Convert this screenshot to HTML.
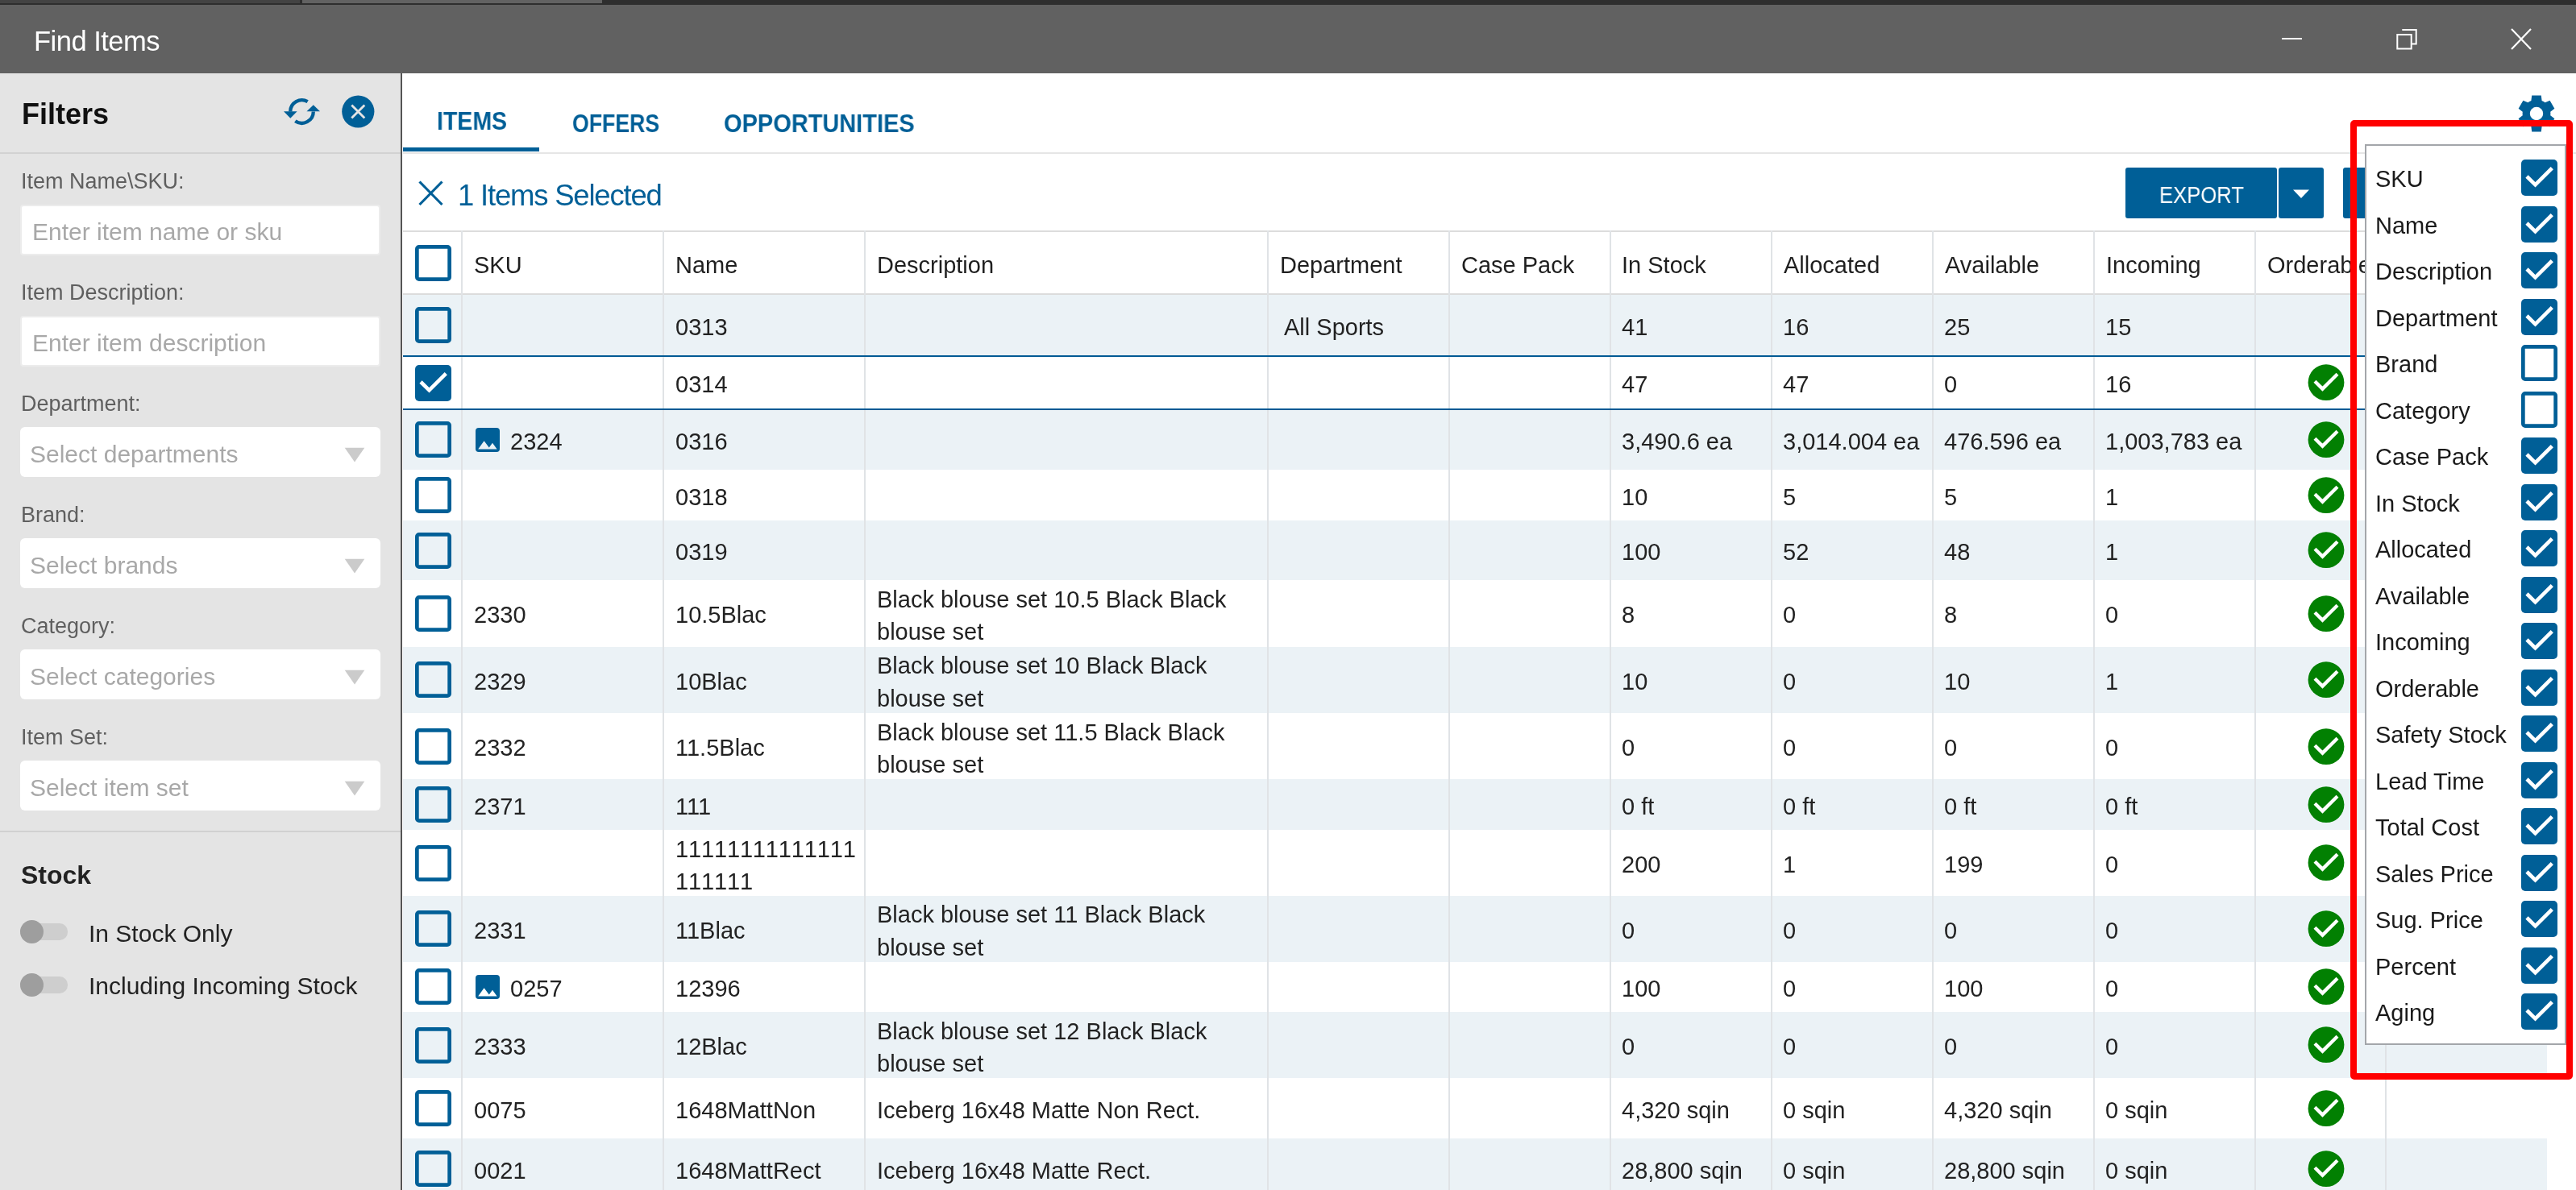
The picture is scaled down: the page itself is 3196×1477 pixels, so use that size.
<!DOCTYPE html>
<html><head><meta charset="utf-8"><title>Find Items</title>
<style>
html,body{margin:0;padding:0;}
body{width:3196px;height:1477px;overflow:hidden;position:relative;background:#fff;font-family:"Liberation Sans",sans-serif;}
body>div,body>svg{position:absolute;}
.t{position:absolute;line-height:1;white-space:nowrap;will-change:transform;}
</style></head><body>

<div style="left:0px;top:0px;width:3196px;height:6px;background:#2e2e2e"></div>
<div style="left:0px;top:0px;width:372px;height:4px;background:#434343"></div>
<div style="left:375px;top:0px;width:372px;height:4px;background:#626262"></div>
<div style="left:0px;top:6px;width:3196px;height:85px;background:#616161"></div>
<div class="t" style="left:41.5px;top:33.8px;font-size:34.5px;color:#ffffff;letter-spacing:-0.5px">Find Items</div>
<div style="left:2831px;top:47px;width:25px;height:2px;background:#fff"></div>
<svg style="position:absolute;left:2970px;top:33px;" width="32" height="32" viewBox="0 0 32 32"><path d="M4.3 10 H21.7 V27.4 H4.3 Z" fill="none" stroke="#fff" stroke-width="2"/><path d="M10.3 4 H27.7 V21.4 H21.7" fill="none" stroke="#fff" stroke-width="2"/></svg>
<svg style="position:absolute;left:3112px;top:32px;" width="32" height="33" viewBox="0 0 32 33"><path d="M4 4 L28 29 M28 4 L4 29" stroke="#fff" stroke-width="2.2"/></svg>
<div style="left:0px;top:91px;width:497px;height:1386px;background:#e4e4e4"></div>
<div style="left:497px;top:91px;width:2.2px;height:1386px;background:#555555"></div>
<div class="t" style="left:27px;top:123.5px;font-size:36px;color:#111111;font-weight:bold">Filters</div>
<svg style="position:absolute;left:340px;top:110px;" width="70" height="60" viewBox="0 0 70 60"><path d="M41.65 16.12 A14.3 14.3 0 0 0 20.20 28.50" fill="none" stroke="#005f97" stroke-width="4.3"/><path d="M12 28.3 L28.6 28.3 L20.3 36.8 Z" fill="#005f97"/><path d="M48.80 28.50 A14.3 14.3 0 0 1 26.30 40.21" fill="none" stroke="#005f97" stroke-width="4.3"/><path d="M40.5 28.3 L57 28.3 L48.8 20.2 Z" fill="#005f97"/></svg>
<svg style="position:absolute;left:424px;top:118px;" width="41" height="41" viewBox="0 0 41 41"><circle cx="20.3" cy="20.5" r="20.1" fill="#005f97"/><path d="M12.3 12.5 L28.3 28.5 M28.3 12.5 L12.3 28.5" stroke="#e4e4e4" stroke-width="2.8"/></svg>
<div style="left:0px;top:189px;width:497px;height:2px;background:#d2d2d2"></div>
<div class="t" style="left:26px;top:211.7px;font-size:27px;color:#5f5f5f;">Item Name\SKU:</div>
<div class="t" style="left:26px;top:349.8px;font-size:27px;color:#5f5f5f;">Item Description:</div>
<div class="t" style="left:26px;top:487.9px;font-size:27px;color:#5f5f5f;">Department:</div>
<div class="t" style="left:26px;top:626.0px;font-size:27px;color:#5f5f5f;">Brand:</div>
<div class="t" style="left:26px;top:764.1px;font-size:27px;color:#5f5f5f;">Category:</div>
<div class="t" style="left:26px;top:902.2px;font-size:27px;color:#5f5f5f;">Item Set:</div>
<div style="left:25px;top:254px;width:447px;height:63px;background:#fff;box-sizing:border-box;border:2px solid #ececec;border-radius:4px"></div>
<div class="t" style="left:40px;top:273.0px;font-size:30px;color:#a8a8a8;">Enter item name or sku</div>
<div style="left:25px;top:392px;width:447px;height:63px;background:#fff;box-sizing:border-box;border:2px solid #ececec;border-radius:4px"></div>
<div class="t" style="left:40px;top:411.0px;font-size:30px;color:#a8a8a8;">Enter item description</div>
<div style="left:25px;top:530px;width:447px;height:62px;background:#fff;border-radius:6px"></div>
<div class="t" style="left:37px;top:548.9px;font-size:30px;color:#a8a8a8;">Select departments</div>
<svg style="position:absolute;left:427px;top:554px;" width="26" height="20" viewBox="0 0 26 20"><path d="M0.7 1.7 L25.3 1.7 L13 19.5 Z" fill="#cbcbcb"/></svg>
<div style="left:25px;top:668px;width:447px;height:62px;background:#fff;border-radius:6px"></div>
<div class="t" style="left:37px;top:687.0px;font-size:30px;color:#a8a8a8;">Select brands</div>
<svg style="position:absolute;left:427px;top:692px;" width="26" height="20" viewBox="0 0 26 20"><path d="M0.7 1.7 L25.3 1.7 L13 19.5 Z" fill="#cbcbcb"/></svg>
<div style="left:25px;top:806px;width:447px;height:62px;background:#fff;border-radius:6px"></div>
<div class="t" style="left:37px;top:825.1px;font-size:30px;color:#a8a8a8;">Select categories</div>
<svg style="position:absolute;left:427px;top:830px;" width="26" height="20" viewBox="0 0 26 20"><path d="M0.7 1.7 L25.3 1.7 L13 19.5 Z" fill="#cbcbcb"/></svg>
<div style="left:25px;top:944px;width:447px;height:62px;background:#fff;border-radius:6px"></div>
<div class="t" style="left:37px;top:963.2px;font-size:30px;color:#a8a8a8;">Select item set</div>
<svg style="position:absolute;left:427px;top:968px;" width="26" height="20" viewBox="0 0 26 20"><path d="M0.7 1.7 L25.3 1.7 L13 19.5 Z" fill="#cbcbcb"/></svg>
<div style="left:0px;top:1031px;width:497px;height:2px;background:#d0d0d0"></div>
<div class="t" style="left:26px;top:1069.9px;font-size:32px;color:#222222;font-weight:bold">Stock</div>
<div style="left:25px;top:1146px;width:59px;height:20.5px;background:#cecece;border-radius:10px"></div>
<div style="left:24.5px;top:1142px;width:29px;height:29px;background:#9e9e9e;border-radius:50%"></div>
<div class="t" style="left:110px;top:1143.9px;font-size:30px;color:#222222;">In Stock Only</div>
<div style="left:25px;top:1212px;width:59px;height:20.5px;background:#cecece;border-radius:10px"></div>
<div style="left:24.5px;top:1208px;width:29px;height:29px;background:#9e9e9e;border-radius:50%"></div>
<div class="t" style="left:110px;top:1209.2px;font-size:30px;color:#222222;">Including Incoming Stock</div>
<div class="t" style="left:541.5px;top:135.2px;font-size:30.5px;color:#005f97;font-weight:bold;transform:scaleX(0.935);transform-origin:0 0">ITEMS</div>
<div class="t" style="left:710px;top:138.2px;font-size:30.5px;color:#005f97;font-weight:bold;transform:scaleX(0.875);transform-origin:0 0">OFFERS</div>
<div class="t" style="left:897.5px;top:138.2px;font-size:30.5px;color:#005f97;font-weight:bold;transform:scaleX(0.95);transform-origin:0 0">OPPORTUNITIES</div>
<div style="left:500px;top:189px;width:2696px;height:2px;background:#e6e6e6"></div>
<div style="left:500px;top:183px;width:169px;height:5px;background:#005f97"></div>
<svg style="position:absolute;left:3120px;top:114px;" width="54" height="54" viewBox="0 0 54 54"><path d="M18.30 11.93 L20.40 10.90 L21.20 4.54 L32.80 4.54 L33.60 10.90 L35.70 11.93 L37.64 13.23 L43.55 10.75 L49.35 20.79 L44.24 24.67 L44.40 27.00 L44.24 29.33 L49.35 33.21 L43.55 43.25 L37.64 40.77 L35.70 42.07 L33.60 43.10 L32.80 49.46 L21.20 49.46 L20.40 43.10 L18.30 42.07 L16.36 40.77 L10.45 43.25 L4.65 33.21 L9.76 29.33 L9.60 27.00 L9.76 24.67 L4.65 20.79 L10.45 10.75 L16.36 13.23 Z" fill="#005f97"/><circle cx="27" cy="27" r="8.2" fill="#fff"/></svg>
<svg style="position:absolute;left:517px;top:222px;" width="36" height="36" viewBox="0 0 36 36"><path d="M3.5 3.5 L31.5 32 M31.5 3.5 L3.5 32" stroke="#005f97" stroke-width="3.2"/></svg>
<div class="t" style="left:568px;top:224.6px;font-size:36.5px;color:#005f97;letter-spacing:-1.2px">1 Items Selected</div>
<div style="left:2637px;top:208px;width:188px;height:63px;background:#005f97;border-radius:3px"></div>
<div class="t" style="left:2679px;top:227.1px;font-size:30px;color:#ffffff;transform:scaleX(0.855);transform-origin:0 0">EXPORT</div>
<div style="left:2827px;top:208px;width:56px;height:63px;background:#005f97;border-radius:3px"></div>
<svg style="position:absolute;left:2844px;top:235px;" width="22" height="12" viewBox="0 0 22 12"><path d="M1 0.5 L21 0.5 L11 11 Z" fill="#fff"/></svg>
<div style="left:2907px;top:208px;width:60px;height:63px;background:#005f97;border-radius:3px"></div>
<div style="left:500px;top:365px;width:2660px;height:77px;background:#ebf2f6"></div>
<div style="left:500px;top:508px;width:2660px;height:75px;background:#ebf2f6"></div>
<div style="left:500px;top:646px;width:2660px;height:74px;background:#ebf2f6"></div>
<div style="left:500px;top:802.5px;width:2660px;height:82.5px;background:#ebf2f6"></div>
<div style="left:500px;top:967px;width:2660px;height:63px;background:#ebf2f6"></div>
<div style="left:500px;top:1112px;width:2660px;height:81.5px;background:#ebf2f6"></div>
<div style="left:500px;top:1256px;width:2660px;height:82px;background:#ebf2f6"></div>
<div style="left:500px;top:1413px;width:2660px;height:64px;background:#ebf2f6"></div>
<div style="left:500px;top:286px;width:2660px;height:2px;background:#dcdcdc"></div>
<div style="left:500px;top:364px;width:2660px;height:2px;background:#dcdcdc"></div>
<div style="left:572px;top:286px;width:2px;height:1191px;background:#e0e3e6"></div>
<div style="left:822px;top:286px;width:2px;height:1191px;background:#e0e3e6"></div>
<div style="left:1072px;top:286px;width:2px;height:1191px;background:#e0e3e6"></div>
<div style="left:1572px;top:286px;width:2px;height:1191px;background:#e0e3e6"></div>
<div style="left:1797px;top:286px;width:2px;height:1191px;background:#e0e3e6"></div>
<div style="left:1997px;top:286px;width:2px;height:1191px;background:#e0e3e6"></div>
<div style="left:2197px;top:286px;width:2px;height:1191px;background:#e0e3e6"></div>
<div style="left:2397px;top:286px;width:2px;height:1191px;background:#e0e3e6"></div>
<div style="left:2597px;top:286px;width:2px;height:1191px;background:#e0e3e6"></div>
<div style="left:2797px;top:286px;width:2px;height:1191px;background:#e0e3e6"></div>
<div style="left:2959px;top:286px;width:2px;height:1191px;background:#e0e3e6"></div>
<div style="left:500px;top:441px;width:2660px;height:2px;background:#005a94"></div>
<div style="left:500px;top:507px;width:2660px;height:2px;background:#005a94"></div>
<svg style="position:absolute;left:515px;top:304px" width="45" height="45" viewBox="0 0 45 45"><path fill-rule="evenodd" fill="#005f97" d="M5 0 H40 A5 5 0 0 1 45 5 V40 A5 5 0 0 1 40 45 H5 A5 5 0 0 1 0 40 V5 A5 5 0 0 1 5 0 Z M4.7 4.7 V40.3 H40.3 V4.7 Z"/></svg>
<div class="t" style="left:588px;top:314.8px;font-size:29px;color:#1f1f1f;">SKU</div>
<div class="t" style="left:838px;top:314.8px;font-size:29px;color:#1f1f1f;">Name</div>
<div class="t" style="left:1088px;top:314.8px;font-size:29px;color:#1f1f1f;">Description</div>
<div class="t" style="left:1588px;top:314.8px;font-size:29px;color:#1f1f1f;">Department</div>
<div class="t" style="left:1813px;top:314.8px;font-size:29px;color:#1f1f1f;">Case Pack</div>
<div class="t" style="left:2012px;top:314.8px;font-size:29px;color:#1f1f1f;">In Stock</div>
<div class="t" style="left:2213px;top:314.8px;font-size:29px;color:#1f1f1f;">Allocated</div>
<div class="t" style="left:2413px;top:314.8px;font-size:29px;color:#1f1f1f;">Available</div>
<div class="t" style="left:2613px;top:314.8px;font-size:29px;color:#1f1f1f;">Incoming</div>
<div class="t" style="left:2813px;top:314.8px;font-size:29px;color:#1f1f1f;">Orderable</div>
<svg style="position:absolute;left:515px;top:381px" width="45" height="45" viewBox="0 0 45 45"><path fill-rule="evenodd" fill="#005f97" d="M5 0 H40 A5 5 0 0 1 45 5 V40 A5 5 0 0 1 40 45 H5 A5 5 0 0 1 0 40 V5 A5 5 0 0 1 5 0 Z M4.7 4.7 V40.3 H40.3 V4.7 Z"/></svg>
<div class="t" style="left:838px;top:391.5px;font-size:29px;color:#222222;">0313</div>
<div class="t" style="left:1592.6px;top:391.5px;font-size:29px;color:#222222;">All Sports</div>
<div class="t" style="left:2012px;top:391.5px;font-size:29px;color:#222222;">41</div>
<div class="t" style="left:2212px;top:391.5px;font-size:29px;color:#222222;">16</div>
<div class="t" style="left:2412px;top:391.5px;font-size:29px;color:#222222;">25</div>
<div class="t" style="left:2612px;top:391.5px;font-size:29px;color:#222222;">15</div>
<svg style="position:absolute;left:515px;top:453px" width="45" height="45" viewBox="0 0 45 45"><rect x="0" y="0" width="45" height="45" rx="5" fill="#005f97"/><path d="M7 21 L17.5 31.3 L38.3 10.6" fill="none" stroke="#fff" stroke-width="4.6"/></svg>
<div class="t" style="left:838px;top:463.0px;font-size:29px;color:#222222;">0314</div>
<div class="t" style="left:2012px;top:463.0px;font-size:29px;color:#222222;">47</div>
<div class="t" style="left:2212px;top:463.0px;font-size:29px;color:#222222;">47</div>
<div class="t" style="left:2412px;top:463.0px;font-size:29px;color:#222222;">0</div>
<div class="t" style="left:2612px;top:463.0px;font-size:29px;color:#222222;">16</div>
<svg style="position:absolute;left:2863px;top:452px;" width="46" height="46" viewBox="0 0 46 46"><circle cx="23" cy="22.7" r="22.4" fill="#028002"/><path d="M9 21.2 L18.5 30.6 L37 12.2" fill="none" stroke="#fff" stroke-width="4.3"/></svg>
<svg style="position:absolute;left:515px;top:523px" width="45" height="45" viewBox="0 0 45 45"><path fill-rule="evenodd" fill="#005f97" d="M5 0 H40 A5 5 0 0 1 45 5 V40 A5 5 0 0 1 40 45 H5 A5 5 0 0 1 0 40 V5 A5 5 0 0 1 5 0 Z M4.7 4.7 V40.3 H40.3 V4.7 Z"/></svg>
<svg style="position:absolute;left:589.5px;top:531px;" width="30" height="30" viewBox="0 0 30 30"><rect x="0" y="0" width="30" height="30" rx="4" fill="#005f97"/><path d="M3.2 26.4 L10.6 16.2 L16.8 24.6 L21 18.8 L26.6 26.4 Z" fill="#ebf2f6"/></svg>
<div class="t" style="left:633px;top:533.5px;font-size:29px;color:#222222;">2324</div>
<div class="t" style="left:838px;top:533.5px;font-size:29px;color:#222222;">0316</div>
<div class="t" style="left:2012px;top:533.5px;font-size:29px;color:#222222;">3,490.6 ea</div>
<div class="t" style="left:2212px;top:533.5px;font-size:29px;color:#222222;">3,014.004 ea</div>
<div class="t" style="left:2412px;top:533.5px;font-size:29px;color:#222222;">476.596 ea</div>
<div class="t" style="left:2612px;top:533.5px;font-size:29px;color:#222222;">1,003,783 ea</div>
<svg style="position:absolute;left:2863px;top:523px;" width="46" height="46" viewBox="0 0 46 46"><circle cx="23" cy="22.7" r="22.4" fill="#028002"/><path d="M9 21.2 L18.5 30.6 L37 12.2" fill="none" stroke="#fff" stroke-width="4.3"/></svg>
<svg style="position:absolute;left:515px;top:592px" width="45" height="45" viewBox="0 0 45 45"><path fill-rule="evenodd" fill="#005f97" d="M5 0 H40 A5 5 0 0 1 45 5 V40 A5 5 0 0 1 40 45 H5 A5 5 0 0 1 0 40 V5 A5 5 0 0 1 5 0 Z M4.7 4.7 V40.3 H40.3 V4.7 Z"/></svg>
<div class="t" style="left:838px;top:602.5px;font-size:29px;color:#222222;">0318</div>
<div class="t" style="left:2012px;top:602.5px;font-size:29px;color:#222222;">10</div>
<div class="t" style="left:2212px;top:602.5px;font-size:29px;color:#222222;">5</div>
<div class="t" style="left:2412px;top:602.5px;font-size:29px;color:#222222;">5</div>
<div class="t" style="left:2612px;top:602.5px;font-size:29px;color:#222222;">1</div>
<svg style="position:absolute;left:2863px;top:592px;" width="46" height="46" viewBox="0 0 46 46"><circle cx="23" cy="22.7" r="22.4" fill="#028002"/><path d="M9 21.2 L18.5 30.6 L37 12.2" fill="none" stroke="#fff" stroke-width="4.3"/></svg>
<svg style="position:absolute;left:515px;top:661px" width="45" height="45" viewBox="0 0 45 45"><path fill-rule="evenodd" fill="#005f97" d="M5 0 H40 A5 5 0 0 1 45 5 V40 A5 5 0 0 1 40 45 H5 A5 5 0 0 1 0 40 V5 A5 5 0 0 1 5 0 Z M4.7 4.7 V40.3 H40.3 V4.7 Z"/></svg>
<div class="t" style="left:838px;top:671.0px;font-size:29px;color:#222222;">0319</div>
<div class="t" style="left:2012px;top:671.0px;font-size:29px;color:#222222;">100</div>
<div class="t" style="left:2212px;top:671.0px;font-size:29px;color:#222222;">52</div>
<div class="t" style="left:2412px;top:671.0px;font-size:29px;color:#222222;">48</div>
<div class="t" style="left:2612px;top:671.0px;font-size:29px;color:#222222;">1</div>
<svg style="position:absolute;left:2863px;top:660px;" width="46" height="46" viewBox="0 0 46 46"><circle cx="23" cy="22.7" r="22.4" fill="#028002"/><path d="M9 21.2 L18.5 30.6 L37 12.2" fill="none" stroke="#fff" stroke-width="4.3"/></svg>
<svg style="position:absolute;left:515px;top:739px" width="45" height="45" viewBox="0 0 45 45"><path fill-rule="evenodd" fill="#005f97" d="M5 0 H40 A5 5 0 0 1 45 5 V40 A5 5 0 0 1 40 45 H5 A5 5 0 0 1 0 40 V5 A5 5 0 0 1 5 0 Z M4.7 4.7 V40.3 H40.3 V4.7 Z"/></svg>
<div class="t" style="left:588px;top:749.2px;font-size:29px;color:#222222;">2330</div>
<div class="t" style="left:838px;top:749.2px;font-size:29px;color:#222222;">10.5Blac</div>
<div class="t" style="left:1088px;top:729.8px;font-size:29px;color:#222222;">Black blouse set 10.5 Black Black</div>
<div class="t" style="left:1088px;top:770.0px;font-size:29px;color:#222222;">blouse set</div>
<div class="t" style="left:2012px;top:749.2px;font-size:29px;color:#222222;">8</div>
<div class="t" style="left:2212px;top:749.2px;font-size:29px;color:#222222;">0</div>
<div class="t" style="left:2412px;top:749.2px;font-size:29px;color:#222222;">8</div>
<div class="t" style="left:2612px;top:749.2px;font-size:29px;color:#222222;">0</div>
<svg style="position:absolute;left:2863px;top:739px;" width="46" height="46" viewBox="0 0 46 46"><circle cx="23" cy="22.7" r="22.4" fill="#028002"/><path d="M9 21.2 L18.5 30.6 L37 12.2" fill="none" stroke="#fff" stroke-width="4.3"/></svg>
<svg style="position:absolute;left:515px;top:821px" width="45" height="45" viewBox="0 0 45 45"><path fill-rule="evenodd" fill="#005f97" d="M5 0 H40 A5 5 0 0 1 45 5 V40 A5 5 0 0 1 40 45 H5 A5 5 0 0 1 0 40 V5 A5 5 0 0 1 5 0 Z M4.7 4.7 V40.3 H40.3 V4.7 Z"/></svg>
<div class="t" style="left:588px;top:831.7px;font-size:29px;color:#222222;">2329</div>
<div class="t" style="left:838px;top:831.7px;font-size:29px;color:#222222;">10Blac</div>
<div class="t" style="left:1088px;top:812.3px;font-size:29px;color:#222222;">Black blouse set 10 Black Black</div>
<div class="t" style="left:1088px;top:852.5px;font-size:29px;color:#222222;">blouse set</div>
<div class="t" style="left:2012px;top:831.7px;font-size:29px;color:#222222;">10</div>
<div class="t" style="left:2212px;top:831.7px;font-size:29px;color:#222222;">0</div>
<div class="t" style="left:2412px;top:831.7px;font-size:29px;color:#222222;">10</div>
<div class="t" style="left:2612px;top:831.7px;font-size:29px;color:#222222;">1</div>
<svg style="position:absolute;left:2863px;top:821px;" width="46" height="46" viewBox="0 0 46 46"><circle cx="23" cy="22.7" r="22.4" fill="#028002"/><path d="M9 21.2 L18.5 30.6 L37 12.2" fill="none" stroke="#fff" stroke-width="4.3"/></svg>
<svg style="position:absolute;left:515px;top:904px" width="45" height="45" viewBox="0 0 45 45"><path fill-rule="evenodd" fill="#005f97" d="M5 0 H40 A5 5 0 0 1 45 5 V40 A5 5 0 0 1 40 45 H5 A5 5 0 0 1 0 40 V5 A5 5 0 0 1 5 0 Z M4.7 4.7 V40.3 H40.3 V4.7 Z"/></svg>
<div class="t" style="left:588px;top:914.0px;font-size:29px;color:#222222;">2332</div>
<div class="t" style="left:838px;top:914.0px;font-size:29px;color:#222222;">11.5Blac</div>
<div class="t" style="left:1088px;top:894.6px;font-size:29px;color:#222222;">Black blouse set 11.5 Black Black</div>
<div class="t" style="left:1088px;top:934.8px;font-size:29px;color:#222222;">blouse set</div>
<div class="t" style="left:2012px;top:914.0px;font-size:29px;color:#222222;">0</div>
<div class="t" style="left:2212px;top:914.0px;font-size:29px;color:#222222;">0</div>
<div class="t" style="left:2412px;top:914.0px;font-size:29px;color:#222222;">0</div>
<div class="t" style="left:2612px;top:914.0px;font-size:29px;color:#222222;">0</div>
<svg style="position:absolute;left:2863px;top:904px;" width="46" height="46" viewBox="0 0 46 46"><circle cx="23" cy="22.7" r="22.4" fill="#028002"/><path d="M9 21.2 L18.5 30.6 L37 12.2" fill="none" stroke="#fff" stroke-width="4.3"/></svg>
<svg style="position:absolute;left:515px;top:976px" width="45" height="45" viewBox="0 0 45 45"><path fill-rule="evenodd" fill="#005f97" d="M5 0 H40 A5 5 0 0 1 45 5 V40 A5 5 0 0 1 40 45 H5 A5 5 0 0 1 0 40 V5 A5 5 0 0 1 5 0 Z M4.7 4.7 V40.3 H40.3 V4.7 Z"/></svg>
<div class="t" style="left:588px;top:986.5px;font-size:29px;color:#222222;">2371</div>
<div class="t" style="left:838px;top:986.5px;font-size:29px;color:#222222;">111</div>
<div class="t" style="left:2012px;top:986.5px;font-size:29px;color:#222222;">0 ft</div>
<div class="t" style="left:2212px;top:986.5px;font-size:29px;color:#222222;">0 ft</div>
<div class="t" style="left:2412px;top:986.5px;font-size:29px;color:#222222;">0 ft</div>
<div class="t" style="left:2612px;top:986.5px;font-size:29px;color:#222222;">0 ft</div>
<svg style="position:absolute;left:2863px;top:976px;" width="46" height="46" viewBox="0 0 46 46"><circle cx="23" cy="22.7" r="22.4" fill="#028002"/><path d="M9 21.2 L18.5 30.6 L37 12.2" fill="none" stroke="#fff" stroke-width="4.3"/></svg>
<svg style="position:absolute;left:515px;top:1049px" width="45" height="45" viewBox="0 0 45 45"><path fill-rule="evenodd" fill="#005f97" d="M5 0 H40 A5 5 0 0 1 45 5 V40 A5 5 0 0 1 40 45 H5 A5 5 0 0 1 0 40 V5 A5 5 0 0 1 5 0 Z M4.7 4.7 V40.3 H40.3 V4.7 Z"/></svg>
<div class="t" style="left:838px;top:1039.6px;font-size:29px;color:#222222;letter-spacing:2px">11111111111111</div>
<div class="t" style="left:838px;top:1079.8px;font-size:29px;color:#222222;letter-spacing:2px">111111</div>
<div class="t" style="left:2012px;top:1059.0px;font-size:29px;color:#222222;">200</div>
<div class="t" style="left:2212px;top:1059.0px;font-size:29px;color:#222222;">1</div>
<div class="t" style="left:2412px;top:1059.0px;font-size:29px;color:#222222;">199</div>
<div class="t" style="left:2612px;top:1059.0px;font-size:29px;color:#222222;">0</div>
<svg style="position:absolute;left:2863px;top:1048px;" width="46" height="46" viewBox="0 0 46 46"><circle cx="23" cy="22.7" r="22.4" fill="#028002"/><path d="M9 21.2 L18.5 30.6 L37 12.2" fill="none" stroke="#fff" stroke-width="4.3"/></svg>
<svg style="position:absolute;left:515px;top:1130px" width="45" height="45" viewBox="0 0 45 45"><path fill-rule="evenodd" fill="#005f97" d="M5 0 H40 A5 5 0 0 1 45 5 V40 A5 5 0 0 1 40 45 H5 A5 5 0 0 1 0 40 V5 A5 5 0 0 1 5 0 Z M4.7 4.7 V40.3 H40.3 V4.7 Z"/></svg>
<div class="t" style="left:588px;top:1140.7px;font-size:29px;color:#222222;">2331</div>
<div class="t" style="left:838px;top:1140.7px;font-size:29px;color:#222222;">11Blac</div>
<div class="t" style="left:1088px;top:1121.3px;font-size:29px;color:#222222;">Black blouse set 11 Black Black</div>
<div class="t" style="left:1088px;top:1161.5px;font-size:29px;color:#222222;">blouse set</div>
<div class="t" style="left:2012px;top:1140.7px;font-size:29px;color:#222222;">0</div>
<div class="t" style="left:2212px;top:1140.7px;font-size:29px;color:#222222;">0</div>
<div class="t" style="left:2412px;top:1140.7px;font-size:29px;color:#222222;">0</div>
<div class="t" style="left:2612px;top:1140.7px;font-size:29px;color:#222222;">0</div>
<svg style="position:absolute;left:2863px;top:1130px;" width="46" height="46" viewBox="0 0 46 46"><circle cx="23" cy="22.7" r="22.4" fill="#028002"/><path d="M9 21.2 L18.5 30.6 L37 12.2" fill="none" stroke="#fff" stroke-width="4.3"/></svg>
<svg style="position:absolute;left:515px;top:1202px" width="45" height="45" viewBox="0 0 45 45"><path fill-rule="evenodd" fill="#005f97" d="M5 0 H40 A5 5 0 0 1 45 5 V40 A5 5 0 0 1 40 45 H5 A5 5 0 0 1 0 40 V5 A5 5 0 0 1 5 0 Z M4.7 4.7 V40.3 H40.3 V4.7 Z"/></svg>
<svg style="position:absolute;left:589.5px;top:1210px;" width="30" height="30" viewBox="0 0 30 30"><rect x="0" y="0" width="30" height="30" rx="4" fill="#005f97"/><path d="M3.2 26.4 L10.6 16.2 L16.8 24.6 L21 18.8 L26.6 26.4 Z" fill="#ffffff"/></svg>
<div class="t" style="left:633px;top:1212.7px;font-size:29px;color:#222222;">0257</div>
<div class="t" style="left:838px;top:1212.7px;font-size:29px;color:#222222;">12396</div>
<div class="t" style="left:2012px;top:1212.7px;font-size:29px;color:#222222;">100</div>
<div class="t" style="left:2212px;top:1212.7px;font-size:29px;color:#222222;">0</div>
<div class="t" style="left:2412px;top:1212.7px;font-size:29px;color:#222222;">100</div>
<div class="t" style="left:2612px;top:1212.7px;font-size:29px;color:#222222;">0</div>
<svg style="position:absolute;left:2863px;top:1202px;" width="46" height="46" viewBox="0 0 46 46"><circle cx="23" cy="22.7" r="22.4" fill="#028002"/><path d="M9 21.2 L18.5 30.6 L37 12.2" fill="none" stroke="#fff" stroke-width="4.3"/></svg>
<svg style="position:absolute;left:515px;top:1275px" width="45" height="45" viewBox="0 0 45 45"><path fill-rule="evenodd" fill="#005f97" d="M5 0 H40 A5 5 0 0 1 45 5 V40 A5 5 0 0 1 40 45 H5 A5 5 0 0 1 0 40 V5 A5 5 0 0 1 5 0 Z M4.7 4.7 V40.3 H40.3 V4.7 Z"/></svg>
<div class="t" style="left:588px;top:1285.0px;font-size:29px;color:#222222;">2333</div>
<div class="t" style="left:838px;top:1285.0px;font-size:29px;color:#222222;">12Blac</div>
<div class="t" style="left:1088px;top:1265.6px;font-size:29px;color:#222222;">Black blouse set 12 Black Black</div>
<div class="t" style="left:1088px;top:1305.8px;font-size:29px;color:#222222;">blouse set</div>
<div class="t" style="left:2012px;top:1285.0px;font-size:29px;color:#222222;">0</div>
<div class="t" style="left:2212px;top:1285.0px;font-size:29px;color:#222222;">0</div>
<div class="t" style="left:2412px;top:1285.0px;font-size:29px;color:#222222;">0</div>
<div class="t" style="left:2612px;top:1285.0px;font-size:29px;color:#222222;">0</div>
<svg style="position:absolute;left:2863px;top:1274px;" width="46" height="46" viewBox="0 0 46 46"><circle cx="23" cy="22.7" r="22.4" fill="#028002"/><path d="M9 21.2 L18.5 30.6 L37 12.2" fill="none" stroke="#fff" stroke-width="4.3"/></svg>
<svg style="position:absolute;left:515px;top:1353px" width="45" height="45" viewBox="0 0 45 45"><path fill-rule="evenodd" fill="#005f97" d="M5 0 H40 A5 5 0 0 1 45 5 V40 A5 5 0 0 1 40 45 H5 A5 5 0 0 1 0 40 V5 A5 5 0 0 1 5 0 Z M4.7 4.7 V40.3 H40.3 V4.7 Z"/></svg>
<div class="t" style="left:588px;top:1363.5px;font-size:29px;color:#222222;">0075</div>
<div class="t" style="left:838px;top:1363.5px;font-size:29px;color:#222222;">1648MattNon</div>
<div class="t" style="left:1088px;top:1363.5px;font-size:29px;color:#222222;">Iceberg 16x48 Matte Non Rect.</div>
<div class="t" style="left:2012px;top:1363.5px;font-size:29px;color:#222222;">4,320 sqin</div>
<div class="t" style="left:2212px;top:1363.5px;font-size:29px;color:#222222;">0 sqin</div>
<div class="t" style="left:2412px;top:1363.5px;font-size:29px;color:#222222;">4,320 sqin</div>
<div class="t" style="left:2612px;top:1363.5px;font-size:29px;color:#222222;">0 sqin</div>
<svg style="position:absolute;left:2863px;top:1353px;" width="46" height="46" viewBox="0 0 46 46"><circle cx="23" cy="22.7" r="22.4" fill="#028002"/><path d="M9 21.2 L18.5 30.6 L37 12.2" fill="none" stroke="#fff" stroke-width="4.3"/></svg>
<svg style="position:absolute;left:515px;top:1428px" width="45" height="45" viewBox="0 0 45 45"><path fill-rule="evenodd" fill="#005f97" d="M5 0 H40 A5 5 0 0 1 45 5 V40 A5 5 0 0 1 40 45 H5 A5 5 0 0 1 0 40 V5 A5 5 0 0 1 5 0 Z M4.7 4.7 V40.3 H40.3 V4.7 Z"/></svg>
<div class="t" style="left:588px;top:1438.5px;font-size:29px;color:#222222;">0021</div>
<div class="t" style="left:838px;top:1438.5px;font-size:29px;color:#222222;">1648MattRect</div>
<div class="t" style="left:1088px;top:1438.5px;font-size:29px;color:#222222;">Iceberg 16x48 Matte Rect.</div>
<div class="t" style="left:2012px;top:1438.5px;font-size:29px;color:#222222;">28,800 sqin</div>
<div class="t" style="left:2212px;top:1438.5px;font-size:29px;color:#222222;">0 sqin</div>
<div class="t" style="left:2412px;top:1438.5px;font-size:29px;color:#222222;">28,800 sqin</div>
<div class="t" style="left:2612px;top:1438.5px;font-size:29px;color:#222222;">0 sqin</div>
<svg style="position:absolute;left:2863px;top:1428px;" width="46" height="46" viewBox="0 0 46 46"><circle cx="23" cy="22.7" r="22.4" fill="#028002"/><path d="M9 21.2 L18.5 30.6 L37 12.2" fill="none" stroke="#fff" stroke-width="4.3"/></svg>
<div style="left:2934px;top:179px;width:250px;height:1118px;background:#fff;box-sizing:border-box;border:2px solid #a3a6aa"></div>
<div class="t" style="left:2946.8px;top:208.2px;font-size:29px;color:#1a1a1a;">SKU</div>
<svg style="position:absolute;left:3128px;top:198px" width="45" height="45" viewBox="0 0 45 45"><rect x="0" y="0" width="45" height="45" rx="5" fill="#005f97"/><path d="M7 21 L17.5 31.3 L38.3 10.6" fill="none" stroke="#fff" stroke-width="4.6"/></svg>
<div class="t" style="left:2946.8px;top:265.7px;font-size:29px;color:#1a1a1a;">Name</div>
<svg style="position:absolute;left:3128px;top:256px" width="45" height="45" viewBox="0 0 45 45"><rect x="0" y="0" width="45" height="45" rx="5" fill="#005f97"/><path d="M7 21 L17.5 31.3 L38.3 10.6" fill="none" stroke="#fff" stroke-width="4.6"/></svg>
<div class="t" style="left:2946.8px;top:323.2px;font-size:29px;color:#1a1a1a;">Description</div>
<svg style="position:absolute;left:3128px;top:313px" width="45" height="45" viewBox="0 0 45 45"><rect x="0" y="0" width="45" height="45" rx="5" fill="#005f97"/><path d="M7 21 L17.5 31.3 L38.3 10.6" fill="none" stroke="#fff" stroke-width="4.6"/></svg>
<div class="t" style="left:2946.8px;top:380.7px;font-size:29px;color:#1a1a1a;">Department</div>
<svg style="position:absolute;left:3128px;top:371px" width="45" height="45" viewBox="0 0 45 45"><rect x="0" y="0" width="45" height="45" rx="5" fill="#005f97"/><path d="M7 21 L17.5 31.3 L38.3 10.6" fill="none" stroke="#fff" stroke-width="4.6"/></svg>
<div class="t" style="left:2946.8px;top:438.2px;font-size:29px;color:#1a1a1a;">Brand</div>
<svg style="position:absolute;left:3128px;top:428px" width="45" height="45" viewBox="0 0 45 45"><path fill-rule="evenodd" fill="#005f97" d="M5 0 H40 A5 5 0 0 1 45 5 V40 A5 5 0 0 1 40 45 H5 A5 5 0 0 1 0 40 V5 A5 5 0 0 1 5 0 Z M4.7 4.7 V40.3 H40.3 V4.7 Z"/></svg>
<div class="t" style="left:2946.8px;top:495.7px;font-size:29px;color:#1a1a1a;">Category</div>
<svg style="position:absolute;left:3128px;top:486px" width="45" height="45" viewBox="0 0 45 45"><path fill-rule="evenodd" fill="#005f97" d="M5 0 H40 A5 5 0 0 1 45 5 V40 A5 5 0 0 1 40 45 H5 A5 5 0 0 1 0 40 V5 A5 5 0 0 1 5 0 Z M4.7 4.7 V40.3 H40.3 V4.7 Z"/></svg>
<div class="t" style="left:2946.8px;top:553.2px;font-size:29px;color:#1a1a1a;">Case Pack</div>
<svg style="position:absolute;left:3128px;top:543px" width="45" height="45" viewBox="0 0 45 45"><rect x="0" y="0" width="45" height="45" rx="5" fill="#005f97"/><path d="M7 21 L17.5 31.3 L38.3 10.6" fill="none" stroke="#fff" stroke-width="4.6"/></svg>
<div class="t" style="left:2946.8px;top:610.7px;font-size:29px;color:#1a1a1a;">In Stock</div>
<svg style="position:absolute;left:3128px;top:601px" width="45" height="45" viewBox="0 0 45 45"><rect x="0" y="0" width="45" height="45" rx="5" fill="#005f97"/><path d="M7 21 L17.5 31.3 L38.3 10.6" fill="none" stroke="#fff" stroke-width="4.6"/></svg>
<div class="t" style="left:2946.8px;top:668.2px;font-size:29px;color:#1a1a1a;">Allocated</div>
<svg style="position:absolute;left:3128px;top:658px" width="45" height="45" viewBox="0 0 45 45"><rect x="0" y="0" width="45" height="45" rx="5" fill="#005f97"/><path d="M7 21 L17.5 31.3 L38.3 10.6" fill="none" stroke="#fff" stroke-width="4.6"/></svg>
<div class="t" style="left:2946.8px;top:725.7px;font-size:29px;color:#1a1a1a;">Available</div>
<svg style="position:absolute;left:3128px;top:716px" width="45" height="45" viewBox="0 0 45 45"><rect x="0" y="0" width="45" height="45" rx="5" fill="#005f97"/><path d="M7 21 L17.5 31.3 L38.3 10.6" fill="none" stroke="#fff" stroke-width="4.6"/></svg>
<div class="t" style="left:2946.8px;top:783.2px;font-size:29px;color:#1a1a1a;">Incoming</div>
<svg style="position:absolute;left:3128px;top:773px" width="45" height="45" viewBox="0 0 45 45"><rect x="0" y="0" width="45" height="45" rx="5" fill="#005f97"/><path d="M7 21 L17.5 31.3 L38.3 10.6" fill="none" stroke="#fff" stroke-width="4.6"/></svg>
<div class="t" style="left:2946.8px;top:840.7px;font-size:29px;color:#1a1a1a;">Orderable</div>
<svg style="position:absolute;left:3128px;top:831px" width="45" height="45" viewBox="0 0 45 45"><rect x="0" y="0" width="45" height="45" rx="5" fill="#005f97"/><path d="M7 21 L17.5 31.3 L38.3 10.6" fill="none" stroke="#fff" stroke-width="4.6"/></svg>
<div class="t" style="left:2946.8px;top:898.2px;font-size:29px;color:#1a1a1a;">Safety Stock</div>
<svg style="position:absolute;left:3128px;top:888px" width="45" height="45" viewBox="0 0 45 45"><rect x="0" y="0" width="45" height="45" rx="5" fill="#005f97"/><path d="M7 21 L17.5 31.3 L38.3 10.6" fill="none" stroke="#fff" stroke-width="4.6"/></svg>
<div class="t" style="left:2946.8px;top:955.7px;font-size:29px;color:#1a1a1a;">Lead Time</div>
<svg style="position:absolute;left:3128px;top:946px" width="45" height="45" viewBox="0 0 45 45"><rect x="0" y="0" width="45" height="45" rx="5" fill="#005f97"/><path d="M7 21 L17.5 31.3 L38.3 10.6" fill="none" stroke="#fff" stroke-width="4.6"/></svg>
<div class="t" style="left:2946.8px;top:1013.2px;font-size:29px;color:#1a1a1a;">Total Cost</div>
<svg style="position:absolute;left:3128px;top:1003px" width="45" height="45" viewBox="0 0 45 45"><rect x="0" y="0" width="45" height="45" rx="5" fill="#005f97"/><path d="M7 21 L17.5 31.3 L38.3 10.6" fill="none" stroke="#fff" stroke-width="4.6"/></svg>
<div class="t" style="left:2946.8px;top:1070.7px;font-size:29px;color:#1a1a1a;">Sales Price</div>
<svg style="position:absolute;left:3128px;top:1061px" width="45" height="45" viewBox="0 0 45 45"><rect x="0" y="0" width="45" height="45" rx="5" fill="#005f97"/><path d="M7 21 L17.5 31.3 L38.3 10.6" fill="none" stroke="#fff" stroke-width="4.6"/></svg>
<div class="t" style="left:2946.8px;top:1128.2px;font-size:29px;color:#1a1a1a;">Sug. Price</div>
<svg style="position:absolute;left:3128px;top:1118px" width="45" height="45" viewBox="0 0 45 45"><rect x="0" y="0" width="45" height="45" rx="5" fill="#005f97"/><path d="M7 21 L17.5 31.3 L38.3 10.6" fill="none" stroke="#fff" stroke-width="4.6"/></svg>
<div class="t" style="left:2946.8px;top:1185.7px;font-size:29px;color:#1a1a1a;">Percent</div>
<svg style="position:absolute;left:3128px;top:1176px" width="45" height="45" viewBox="0 0 45 45"><rect x="0" y="0" width="45" height="45" rx="5" fill="#005f97"/><path d="M7 21 L17.5 31.3 L38.3 10.6" fill="none" stroke="#fff" stroke-width="4.6"/></svg>
<div class="t" style="left:2946.8px;top:1243.2px;font-size:29px;color:#1a1a1a;">Aging</div>
<svg style="position:absolute;left:3128px;top:1233px" width="45" height="45" viewBox="0 0 45 45"><rect x="0" y="0" width="45" height="45" rx="5" fill="#005f97"/><path d="M7 21 L17.5 31.3 L38.3 10.6" fill="none" stroke="#fff" stroke-width="4.6"/></svg>
<div style="left:2916px;top:149px;width:276px;height:1191px;box-sizing:border-box;border:8.2px solid #ff0000;border-radius:5px"></div>
</body></html>
